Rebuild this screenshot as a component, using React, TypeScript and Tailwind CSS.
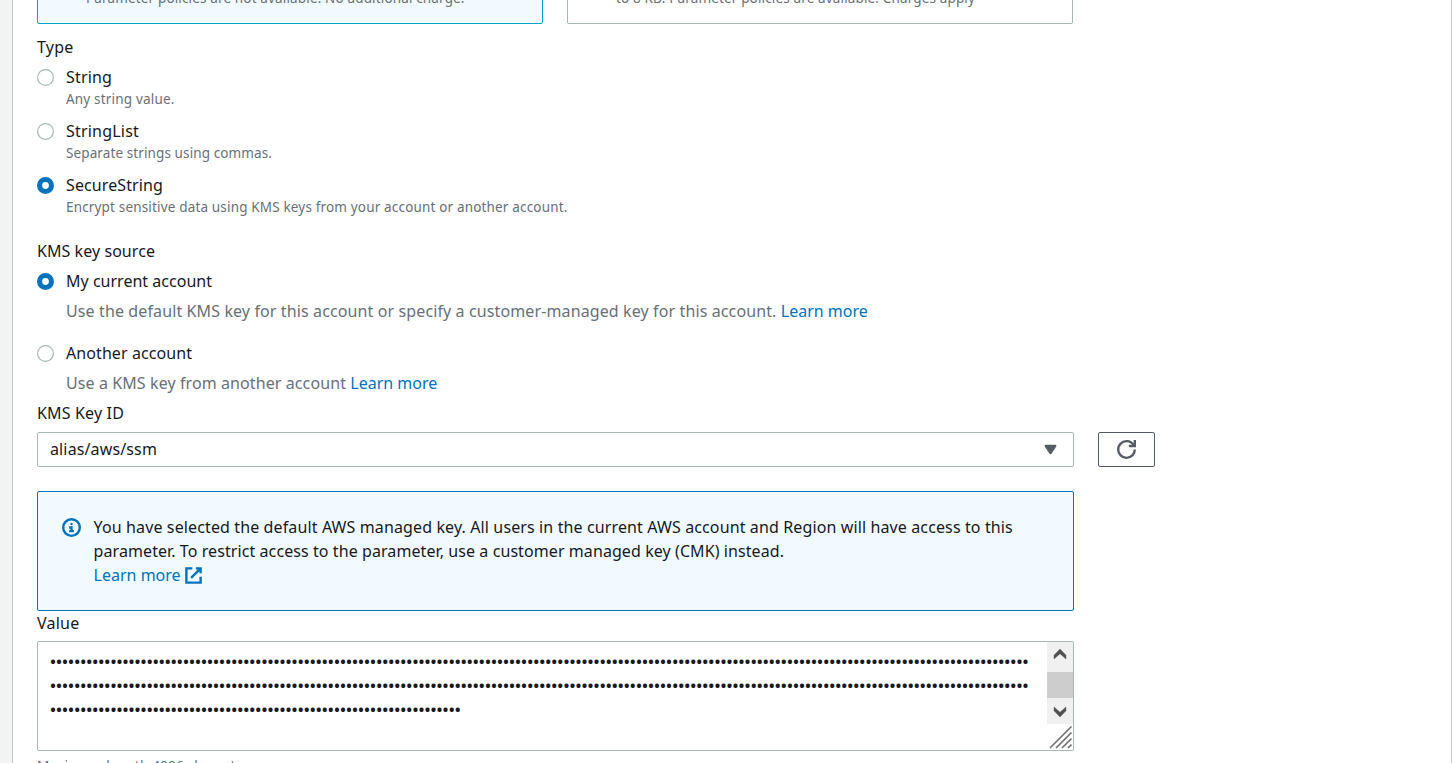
import type { ReactNode } from "react";

function Radio({ checked = false }: { checked?: boolean }) {
  return (
    <svg className="mt-1 h-[17px] w-[17px] shrink-0" viewBox="0 0 17 17">
      {checked ? (
        <circle cx="8.5" cy="8.5" r="5.95" fill="#fff" stroke="#0073bb" strokeWidth="5.1" />
      ) : (
        <circle cx="8.5" cy="8.5" r="7.9" fill="#fff" stroke="#aab7b8" strokeWidth="1.2" />
      )}
    </svg>
  );
}

function Option({ label, checked, children }: { label: ReactNode; checked?: boolean; children: ReactNode }) {
  return (
    <label className="flex items-start gap-3">
      <Radio checked={checked} />
      <span className="block">
        <span className="block h-6 whitespace-nowrap">{label}</span>
        {children}
      </span>
    </label>
  );
}

const hint = "block h-5 whitespace-nowrap text-[13.5px] leading-5 text-[#687078]";
const icon = "h-[19px] w-[19px] shrink-0";

function Dots({ count }: { count: number }) {
  return <div className="h-6 whitespace-nowrap text-[18.5px] tracking-[-0.916px]">{"•".repeat(count)}</div>;
}

export default function App() {
  return (
    <div className="flex h-[763px] w-[1452px] overflow-hidden bg-[#f2f3f3] font-['Noto_Sans',sans-serif] text-[16px] leading-6 text-[#16191f]">
      <div className="ml-3 h-[763px] w-[1440px] border-x border-[#c2c5c6] bg-white pl-6">
        <div className="-mt-[30px] flex gap-6">
          <div className="h-[54px] w-[506px] rounded-[2px] border border-[#00a1c9] bg-[#f1faff] pt-[17px] pl-12">
            <span className={`${hint} tracking-[0.15px]`}>Parameter policies are not available. No additional charge.</span>
          </div>
          <div className="h-[54px] w-[506px] rounded-[2px] border border-[#aab7b8] bg-white pt-[17px] pl-12">
            <span className={`${hint} tracking-[0.148px]`}>to 8 KB. Parameter policies are available. Charges apply</span>
          </div>
        </div>

        <div className="mt-[11px] tracking-[0.22px]">Type</div>
        <div className="mt-1.5 flex flex-col gap-2.5">
          <Option label={<span className="tracking-[0.16px]">String</span>}>
            <span className={`${hint} tracking-[0.182px]`}>Any string value.</span>
          </Option>
          <Option label={<span className="tracking-[0.2px]">StringList</span>}>
            <span className={`${hint} tracking-[0.107px]`}>Separate strings using commas.</span>
          </Option>
          <Option checked label={<span className="tracking-[0.107px]">SecureString</span>}>
            <span className={`${hint} tracking-[0.166px]`}>
              Encrypt sensitive data using KMS keys from your account or another account.
            </span>
          </Option>
        </div>

        <div className="mt-[22px] tracking-[0.06px]">KMS key source</div>
        <div className="mt-1.5 flex flex-col gap-[18px]">
          <Option checked label={<span className="tracking-[0.016px]">My current account</span>}>
            <span className="mt-1.5 block h-6 whitespace-nowrap text-[#687078]">
              <span className="tracking-[0.117px]">
                Use the default KMS key for this account or specify a customer-managed key for this account.{" "}
              </span>
              <a className="text-[#0073bb]">Learn more</a>
            </span>
          </Option>
          <Option label={<span className="tracking-[0.08px]">Another account</span>}>
            <span className="mt-1.5 block h-6 whitespace-nowrap text-[#687078]">
              <span className="tracking-[0.095px]">Use a KMS key from another account </span>
              <a className="text-[#0073bb]">Learn more</a>
            </span>
          </Option>
        </div>

        <div className="mt-1.5 tracking-[0.16px]">KMS Key ID</div>
        <div className="mt-[7px] flex gap-6">
          <div className="flex h-[35px] w-[1037px] items-center justify-between rounded-[2px] border border-[#aab7b8] pr-[13px] pl-3">
            <span className="pb-0.5 tracking-[0.132px]">alias/aws/ssm</span>
            <svg className={icon} viewBox="0 0 16 16">
              <path d="M4 5h8l-4 6-4-6z" fill="#545b64" stroke="#545b64" strokeWidth="2" strokeLinejoin="round" />
            </svg>
          </div>
          <button className="flex h-[35px] w-[57px] items-center justify-center rounded-[2px] border border-[#545b64] bg-white">
            <svg className={icon} viewBox="0 0 16 16" fill="none" stroke="#545b64" strokeWidth="2">
              <path d="M10 5h5V0" />
              <path d="M15 8a6.957 6.957 0 0 1-7 7 6.957 6.957 0 0 1-7-7 6.957 6.957 0 0 1 7-7 6.87 6.87 0 0 1 6.3 4" />
            </svg>
          </button>
        </div>

        <div className="mt-6 flex h-[120px] w-[1037px] items-start gap-[12.6px] rounded-[2px] border border-[#0073bb] bg-[#f1faff] pt-[23px] pl-6">
          <svg className={`${icon} mt-[3px]`} viewBox="0 0 16 16" fill="none" stroke="#0073bb" strokeWidth="2">
            <circle cx="8" cy="8" r="7" />
            <path d="M8 11V8H6M10 11H6" />
            <path d="M7.99 5H8v.01H7.99z" strokeLinejoin="round" />
          </svg>
          <div className="whitespace-nowrap">
            <div className="tracking-[0.122px]">
              You have selected the default AWS managed key. All users in the current AWS account and Region will have access to this
            </div>
            <div className="tracking-[0.082px]">
              parameter. To restrict access to the parameter, use a customer managed key (CMK) instead.
            </div>
            <a className="flex items-center gap-[3.4px] text-[#0073bb]">
              <span>Learn more</span>
              <svg className={icon} viewBox="0 0 16 16" fill="none" stroke="#0073bb" strokeWidth="2">
                <path d="M10 2h4v4M6 10l8-8" />
                <path d="M14 9.048V14H2V2h5" />
              </svg>
            </a>
          </div>
        </div>

        <div className="tracking-[0.24px]">Value</div>
        <div className="mt-1.5 flex h-[110px] w-[1037px] justify-between rounded-[2px] border border-[#aab7b8] bg-white">
          <div className="pt-[7px] pl-[11.5px]">
            <Dots count={162} />
            <Dots count={162} />
            <Dots count={68} />
          </div>
          <div className="w-[26px]">
            <div className="h-[82px] bg-[#f0f0f0]">
              <svg className="block h-[30px] w-[26px]" viewBox="0 0 26 30">
                <path d="M7 17V13.2L13 7L19 13.2V17L13 11.8Z" fill="#505050" stroke="#505050" strokeWidth=".4" />
              </svg>
              <div className="h-[26px] bg-[#cdcdcd]" />
              <svg className="block h-[26px] w-[26px]" viewBox="0 0 26 26">
                <path d="M7 9V12.8L13 19L19 12.8V9L13 14.2Z" fill="#505050" stroke="#505050" strokeWidth=".4" />
              </svg>
            </div>
            <svg className="block h-[26px] w-[26px]" viewBox="0 0 26 26" stroke="#707070" strokeWidth="1.6">
              <path d="M3 24L24.5 2.5M9 24L24.5 8.5M15 24L24.5 14.5M21 24L24.5 20.5" />
            </svg>
          </div>
        </div>
        <div className={`${hint} mt-[5px] tracking-[0.21px]`}>Maximum length 4096 characters</div>
      </div>
    </div>
  );
}
